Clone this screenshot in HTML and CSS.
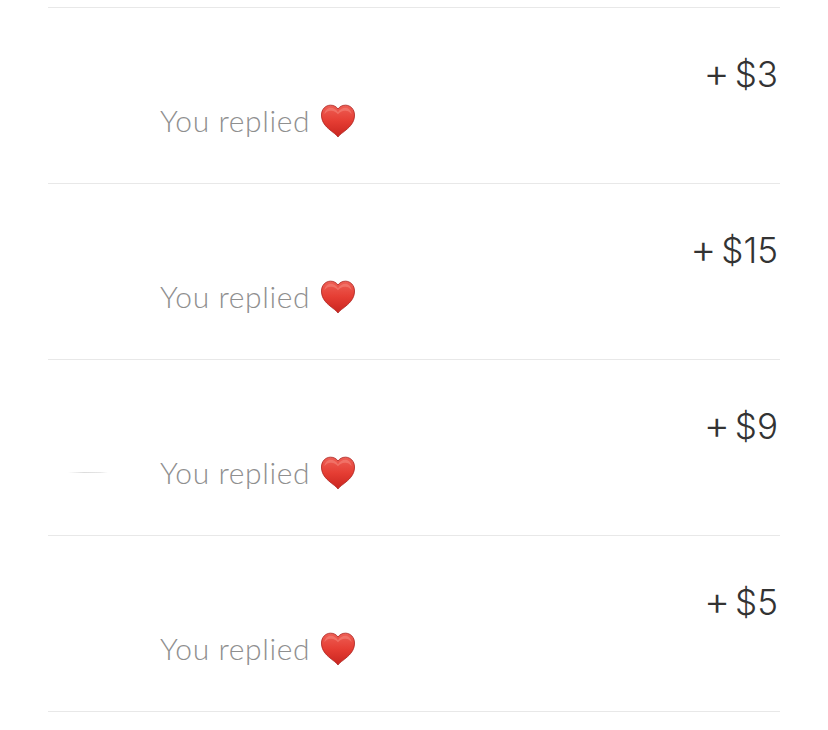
FILE: index.html

```html
<!DOCTYPE html>
<html lang="en">
<head>
  <meta charset="UTF-8" />
  <meta name="viewport" content="width=device-width, initial-scale=1.0"/>
  <title>Replies</title>
  <link rel="stylesheet" href="styles.css">
</head>
<body>
  <svg class="defs" width="0" height="0">
    <defs>
      <linearGradient id="heartFill" x1="0" y1="0" x2="0" y2="1">
        <stop offset="0" stop-color="#ee5f55"/>
        <stop offset="0.5" stop-color="#e53d33"/>
        <stop offset="1" stop-color="#c9251f"/>
      </linearGradient>
      <symbol id="heart" viewBox="0 0 35 34">
        <path d="M17.500 33.500C16 31 12 28.800 7.800 25 3 20.700.5 16.500.5 10.800.5 4.800 4.800.7 9.800.7c3.400 0 6.100 1.500 7.700 4 1.600-2.500 4.300-4 7.700-4 5 0 9.300 4.100 9.300 10.100 0 5.700-2.500 9.900-7.300 14.200-4.200 3.800-8.200 6-9.700 8.500z" fill="url(#heartFill)" stroke="#a81c18" stroke-width=".8"/>
        <path d="M3.500 10C4 6 6.800 3.400 10 3.400c2.800 0 5.500 1.700 7.500 4.600 2-2.900 4.700-4.600 7.500-4.600 3.200 0 6 2.600 6.500 6.600-2-2.700-4.400-3.800-7-3.600-2.800.2-5 1.400-7 3.600-2-2.200-4.200-3.400-7-3.600-2.600-.2-5 .9-7 3.600z" fill="#f5897d" opacity=".55"/>
      </symbol>
    </defs>
  </svg>

  <div class="lista">
    <div class="fila">
      <div class="importe"><span class="mas">+</span><span>$3</span></div>
      <div class="respuesta"><div class="hueco"></div>You replied <svg class="corazon"><use href="#heart"/></svg></div>
    </div>
    <div class="fila">
      <div class="importe"><span class="mas">+</span><span>$15</span></div>
      <div class="respuesta"><div class="hueco"></div>You replied <svg class="corazon"><use href="#heart"/></svg></div>
    </div>
    <div class="fila">
      <div class="importe"><span class="mas">+</span><span>$9</span></div>
      <div class="respuesta"><div class="hueco"><div class="resto"></div></div>You replied <svg class="corazon"><use href="#heart"/></svg></div>
    </div>
    <div class="fila">
      <div class="importe"><span class="mas">+</span><span>$5</span></div>
      <div class="respuesta"><div class="hueco"></div>You replied <svg class="corazon"><use href="#heart"/></svg></div>
    </div>
  </div>
</body>
</html>
```

FILE: styles.css

```css
body {
  margin: 0;
  background-color: #fff;
  font-family: Lato, "Liberation Sans", sans-serif;
  overflow: hidden;
}

.defs {
  display: block;
  height: 0;
}

.lista {
  margin: 7px 48px 0;
  border-top: 1px solid #e8e8e8;
}

.fila {
  height: 175px;
  border-bottom: 1px solid #e8e8e8;
  display: flex;
  flex-direction: column;
}

.importe {
  margin-top: 44px;
  padding-right: 2px;
  display: flex;
  justify-content: flex-end;
  align-items: baseline;
  gap: 5px;
  font-family: Inter, Lato, sans-serif;
  font-size: 35px;
  line-height: 44px;
  font-weight: 300;
  color: #333;
}

.mas {
  font-size: 40px;
  line-height: 40px;
}

.respuesta {
  margin-top: 6px;
  display: flex;
  align-items: center;
  font-size: 30px;
  line-height: 36px;
  font-weight: 300;
  letter-spacing: 0.6px;
  color: #8f8f8f;
}

.hueco {
  width: 112px;
  padding-left: 20px;
  box-sizing: border-box;
}

/* resto de un nombre borrado, apenas visible */
.resto {
  width: 40px;
  height: 1px;
  background: linear-gradient(to right, #fff, #dcdcdc 40%, #e6e6e6 80%, #fff);
}

.corazon {
  width: 34px;
  height: 34px;
  margin: 1px 0 0 11px;
}
```
